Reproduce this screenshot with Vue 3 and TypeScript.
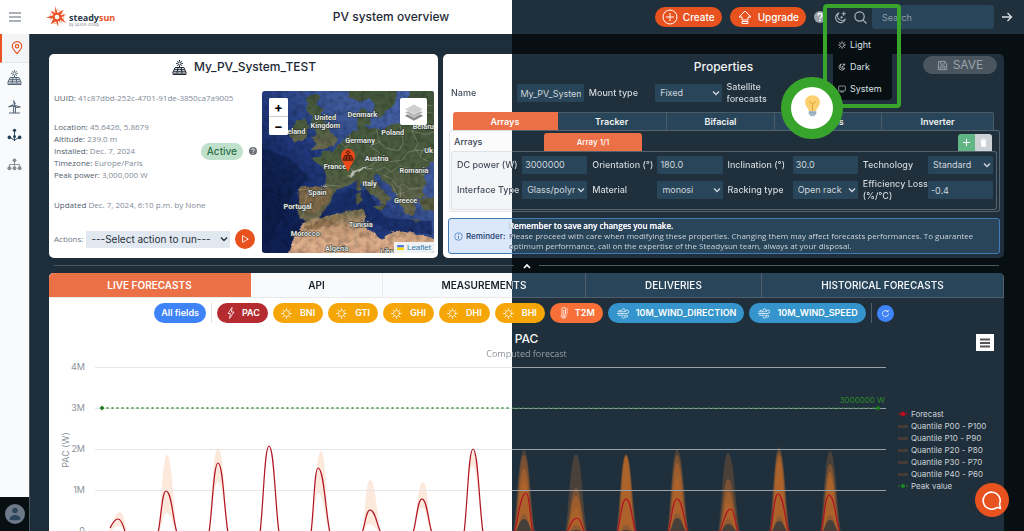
<script setup lang="ts">
import { ref } from 'vue'

interface Pill { label: string; kind: string; icon: string }
interface Field { id: string; label: string; value: string; select: boolean }
interface Peak { from: number; to: number; x: number; y: number }
interface Band { from: number; to: number; x: number; y: number; lowX: number; lowY: number }

const base = 533

const facts = [
  { name: 'Location:', value: '45.6426, 5.8679' },
  { name: 'Altitude:', value: '239.0 m' },
  { name: 'Installed:', value: 'Dec. 7, 2024' },
  { name: 'Timezone:', value: 'Europe/Paris' },
  { name: 'Peak power:', value: '3,000,000 W' },
]

const arrayFields: Field[] = [
  { id: 'power', label: 'DC power (W)', value: '3000000', select: false },
  { id: 'orientation', label: 'Orientation (°)', value: '180.0', select: false },
  { id: 'inclination', label: 'Inclination (°)', value: '30.0', select: false },
  { id: 'technology', label: 'Technology', value: 'Standard', select: true },
  { id: 'interface', label: 'Interface Type', value: 'Glass/polymer', select: true },
  { id: 'material', label: 'Material', value: 'monosi', select: true },
  { id: 'racking', label: 'Racking type', value: 'Open rack', select: true },
  { id: 'loss', label: 'Efficiency Loss\n(%/°C)', value: '-0.4', select: false },
]

const propertyTabs = ['Arrays', 'Tracker', 'Bifacial', 'Losses', 'Inverter']
const activeProperty = ref('Arrays')
const dataTabs = ['LIVE FORECASTS', 'API', 'MEASUREMENTS', 'DELIVERIES', 'HISTORICAL FORECASTS']
const activeData = ref('LIVE FORECASTS')

const pills: Pill[] = [
  { label: 'PAC', kind: 'red', icon: 'bolt' },
  { label: 'BNI', kind: 'amber', icon: 'sun' },
  { label: 'GTI', kind: 'amber', icon: 'sun' },
  { label: 'GHI', kind: 'amber', icon: 'sun' },
  { label: 'DHI', kind: 'amber', icon: 'sun' },
  { label: 'BHI', kind: 'amber', icon: 'sun' },
  { label: 'T2M', kind: 'coral', icon: 'temp' },
  { label: '10M_WIND_DIRECTION', kind: 'sky', icon: 'wind' },
  { label: '10M_WIND_SPEED', kind: 'sky', icon: 'wind' },
]

const legend = ['Quantile P00 - P100', 'Quantile P10 - P90', 'Quantile P20 - P80', 'Quantile P30 - P70', 'Quantile P40 - P60']

const gridRows = [
  { y: 367, label: '4M' },
  { y: 408, label: '3M' },
  { y: 449, label: '2M' },
  { y: 490, label: '1M' },
  { y: 531, label: '0' },
]

const peaks: Peak[] = [
  { from: 158, to: 177, x: 166, y: 491 },
  { from: 209, to: 228, x: 218, y: 463 },
  { from: 260, to: 279, x: 269, y: 446 },
  { from: 311, to: 330, x: 318, y: 468 },
  { from: 362, to: 381, x: 370, y: 510 },
  { from: 413, to: 432, x: 422, y: 499 },
  { from: 464, to: 483, x: 473, y: 449 },
  { from: 514, to: 533, x: 526, y: 493 },
  { from: 566, to: 585, x: 577, y: 518 },
  { from: 617, to: 636, x: 626, y: 499 },
  { from: 668, to: 688, x: 677, y: 499 },
  { from: 719, to: 738, x: 731, y: 509 },
  { from: 770, to: 789, x: 778, y: 494 },
  { from: 821, to: 840, x: 829, y: 495 },
]

const lightBands: Band[] = [
  { from: 108, to: 128, x: 120, y: 512, lowX: 118, lowY: 526 },
  { from: 158, to: 177, x: 167, y: 455, lowX: 167, lowY: 513 },
  { from: 208, to: 229, x: 218, y: 448, lowX: 218, lowY: 482 },
  { from: 260, to: 280, x: 270, y: 447, lowX: 269, lowY: 450 },
  { from: 311, to: 330, x: 321, y: 451, lowX: 318, lowY: 493 },
  { from: 362, to: 381, x: 370, y: 480, lowX: 369, lowY: 524 },
  { from: 413, to: 432, x: 423, y: 482, lowX: 422, lowY: 508 },
  { from: 464, to: 484, x: 474, y: 450, lowX: 472, lowY: 466 },
]

// Tops of the nested quantile areas, widest first.
const darkBands = [
  { from: 513, to: 535, x: 524, tops: [450, 455, 468, 480], low: 519 },
  { from: 565, to: 587, x: 576, tops: [454, 488, 496, 508], low: 530 },
  { from: 616, to: 637, x: 626, tops: [454, 455, 456, 457], low: 530 },
  { from: 667, to: 689, x: 677, tops: [449, 455, 463, 478], low: 518 },
  { from: 718, to: 740, x: 728, tops: [453, 479, 491, 502], low: 524 },
  { from: 769, to: 790, x: 779, tops: [447, 451, 455, 461], low: 521 },
  { from: 820, to: 841, x: 830, tops: [451, 464, 472, 478], low: 520 },
]

function bell(from: number, to: number, x: number, y: number): string {
  const h = base - y
  const l = x - from
  const r = to - x
  return `M${from},${base} C${from + l * 0.4},${base - h * 0.35} ${x - l * 0.5},${y} ${x},${y} ` +
    `C${x + r * 0.5},${y} ${to - r * 0.4},${base - h * 0.35} ${to},${base}`
}

function bandPath(b: Band): string {
  return `${bell(b.from, b.to, b.x, b.y)}Z ${bell(b.from + 1, b.to - 1, b.lowX, b.lowY)}Z`
}
</script>

<template>
  <div class="app">
    <svg class="defs" aria-hidden="true">
      <symbol id="solar" viewBox="0 0 24 24">
        <g fill="none" stroke="currentColor" stroke-width="1.6">
          <circle cx="12" cy="5.500" r="2.600" />
          <path d="M12 0v2M6.500 5.500h2M15.500 5.500h2M8 1.500l1.300 1.300M16 1.500l-1.300 1.300M8 9.500l1.300-1.300M16 9.500l-1.300-1.300M12 9v3" />
          <path d="M5 12h14l4 9H1zM3.500 15h17M2.300 18h19.400M9.500 12L8 21M14.500 12l1.500 9" />
          <path d="M1 23.200h22" />
        </g>
      </symbol>
      <symbol id="sun" viewBox="0 0 24 24">
        <g fill="none" stroke="currentColor" stroke-width="1.700" stroke-linecap="round">
          <circle cx="12" cy="12" r="6.500" />
          <path d="M12 1v3M12 20v3M1 12h3M20 12h3M4.200 4.200l2 2M17.800 17.800l2 2M4.200 19.800l2-2M17.800 6.200l2-2" />
        </g>
      </symbol>
      <symbol id="bolt" viewBox="0 0 24 24">
        <path d="M14 1L6 13h5l-2 10 9-13h-5z" fill="none" stroke="currentColor" stroke-width="1.600" stroke-linejoin="round" />
      </symbol>
      <symbol id="temp" viewBox="0 0 24 24">
        <g fill="none" stroke="currentColor" stroke-width="1.600">
          <path d="M8 14V4a3.500 3.500 0 0 1 7 0v10a5 5 0 1 1-7 0z" />
          <circle cx="11.500" cy="18" r="2" /><path d="M11.500 16V6M17 4h3M17 8h3M17 12h3" />
        </g>
      </symbol>
      <symbol id="wind" viewBox="0 0 30 24">
        <g fill="none" stroke="currentColor" stroke-width="1.700" stroke-linecap="round">
          <path d="M2 8h13a3.500 3.500 0 1 0-3.500-3.500M1 12h22a4 4 0 1 0-4-4M3 16h12a3.500 3.500 0 1 1-3.500 3.500M19 16h3a2.500 2.500 0 1 1-2 4M5 5h4" />
        </g>
      </symbol>
      <symbol id="moon" viewBox="0 0 24 24">
        <g fill="none" stroke="currentColor" stroke-width="2" stroke-linecap="round" stroke-linejoin="round">
          <path d="M9 3.500A9.200 9.200 0 1 0 20.800 15 7.800 7.800 0 0 1 9 3.500z" />
          <path d="M18 2v6M15 5h6M14 10v3M12.500 11.500h3" />
        </g>
      </symbol>
      <symbol id="help" viewBox="0 0 24 24">
        <circle cx="12" cy="12" r="12" fill="currentColor" />
        <path d="M8 9a4 4 0 1 1 5.500 3.700c-1 .5-1.500 1-1.500 2.300" fill="none" stroke="#fff" stroke-width="2.600" />
        <circle cx="12" cy="18.500" r="1.700" fill="#fff" />
      </symbol>
      <symbol id="chevron" viewBox="0 0 10 10">
        <path d="M2 3.500l3 3 3-3" fill="none" stroke="currentColor" stroke-width="1.400" />
      </symbol>
    </svg>

    <header class="topbar">
      <button class="bare burger" aria-label="Open menu">
        <svg viewBox="0 0 12 10"><path d="M0 1h12M0 5h12M0 9h12" stroke="#5b6673" stroke-width="1.200" /></svg>
      </button>
      <a class="logo" href="#" aria-label="steadysun by QUOS Group">
        <svg viewBox="0 0 24 24">
          <circle cx="12" cy="12" r="7.500" fill="none" stroke="#f4a07c" stroke-width=".8" stroke-dasharray="8 2" />
          <path fill="#e9562a" fill-rule="evenodd" d="M10 0l2.500 7.500L19 4l-3 6 6-1-5 3.500 5 6-7-3.500 1 3-3-2 .5 7L11 17l-6 3 3-6-8-1.500 8-2.500-3-5 5 2.500zM12 9.500a2.500 2.500 0 1 0 0 5 2.500 2.500 0 1 0 0-5z" />
        </svg>
        <span class="brand"><b>steady<i>sun</i></b><small>by QUOS Group</small></span>
      </a>
      <h1>PV system overview</h1>
      <button class="cta">
        <svg viewBox="0 0 16 16" fill="none" stroke="#fff"><circle cx="8" cy="8" r="7" /><path d="M8 4v8M4 8h8" /></svg>Create
      </button>
      <button class="cta">
        <svg viewBox="0 0 16 16" fill="none" stroke="#fff" stroke-linejoin="round"><path d="M8 2l6 6h-3v3H5V8H2zM5 12.500h6v2H5z" /></svg>Upgrade
      </button>
      <button class="bare help" aria-label="Help"><svg viewBox="0 0 24 24"><use href="#help" /></svg></button>
      <div class="theme">
        <button class="bare" aria-label="Theme"><svg viewBox="0 0 24 24"><use href="#moon" /></svg></button>
        <div class="menu">
          <button><svg viewBox="0 0 24 24"><use href="#sun" /></svg>Light</button>
          <button><svg viewBox="0 0 24 24"><use href="#moon" /></svg>Dark</button>
          <button>
            <svg viewBox="0 0 24 24" fill="none" stroke="currentColor" stroke-width="1.800"><rect x="2" y="3" width="20" height="15" rx="2" /><path d="M7 21h10" /></svg>System
          </button>
        </div>
        <div class="frame"></div>
        <div class="bulb">
          <svg viewBox="0 0 28 34">
            <path d="M14 2C7.500 2 3 6.500 3 12.500c0 5 4 6.500 5.500 12.500h11c1.500-6 5.500-7.500 5.500-12.500C25 6.500 20.500 2 14 2z" fill="#fdd06f" />
            <path d="M9 11l5 4 5-4M14 15v10" fill="none" stroke="#e8a33c" stroke-width="1.500" />
            <path d="M8.500 25h11v5l-3 3h-5l-3-3z" fill="#a9bccb" /><path d="M8.500 28h11" stroke="#7c93a6" />
          </svg>
        </div>
      </div>
      <button class="bare find" aria-label="Search">
        <svg viewBox="0 0 14 14" fill="none" stroke="currentColor" stroke-width="1.300"><circle cx="6" cy="6" r="5" /><path d="M9.500 9.500l4 4" /></svg>
      </button>
      <input class="search" type="search" placeholder="Search" aria-label="Search systems" />
      <button class="bare go" aria-label="Go">
        <svg viewBox="0 0 12 12" fill="none" stroke="currentColor" stroke-width="1.300"><path d="M1 6h9M6.500 2L10.500 6l-4 4" /></svg>
      </button>
    </header>

    <div class="body">
      <nav class="side" aria-label="Sections">
        <a class="on" href="#" aria-label="Sites">
          <svg viewBox="0 0 14 16" fill="none" stroke="currentColor" stroke-width="1.300"><path d="M7 14.500C3 10.500 1.500 8.500 1.500 6a5.500 5.500 0 0 1 11 0c0 2.500-1.500 4.500-5.500 8.500z" /><circle cx="7" cy="6" r="2" /></svg>
        </a>
        <a href="#" aria-label="Solar"><svg viewBox="0 0 24 24"><use href="#solar" /></svg></a>
        <a href="#" aria-label="Wind">
          <svg viewBox="0 0 16 16" fill="none" stroke="currentColor" stroke-width="1.100"><path d="M7 15V8h2v7M2 15h12M8 7L7 1.500l2 4M8 7L1.500 8.500 6.500 6M8.500 7l6 1.500-5 .5" /></svg>
        </a>
        <a class="navy" href="#" aria-label="Portfolio">
          <svg viewBox="0 0 16 16"><path d="M8 3v11M3 10l5 3 5-3" fill="none" stroke="currentColor" /><g fill="currentColor"><circle cx="8" cy="2.500" r="1.800" /><circle cx="2.500" cy="10" r="1.900" /><circle cx="13.500" cy="10" r="1.900" /><circle cx="8" cy="9" r="1.600" /></g></svg>
        </a>
        <a class="grey" href="#" aria-label="Hierarchy">
          <svg viewBox="0 0 16 16"><path d="M8 4v6M2.500 11V8h11v3" fill="none" stroke="currentColor" /><g fill="currentColor"><circle cx="8" cy="3.500" r="2" /><circle cx="2.500" cy="12" r="2.100" /><circle cx="8" cy="12" r="2.100" /><circle cx="13.500" cy="12" r="2.100" /></g></svg>
        </a>
        <button class="avatar" aria-label="Account">
          <svg viewBox="0 0 20 20"><circle cx="10" cy="10" r="10" fill="#6d7889" /><circle cx="10" cy="6.500" r="2.800" fill="#2b465b" /><path d="M4.500 15.500c0-6 11-6 11 0 0 1-11 1-11 0z" fill="#2b465b" /></svg>
        </button>
      </nav>

      <main>
        <div class="cards">
          <section class="card system">
            <h2><svg viewBox="0 0 24 24"><use href="#solar" /></svg>My_PV_System_TEST</h2>
            <div class="system-body">
              <div class="details">
                <p><b>UUID:</b> 41c87dbd-252c-4701-91de-3850ca7a9005</p>
                <div class="facts">
                  <div><p v-for="f in facts" :key="f.name"><b>{{ f.name }}</b> {{ f.value }}</p></div>
                  <div class="status">
                    <span>Active</span><svg viewBox="0 0 24 24"><use href="#help" /></svg>
                  </div>
                </div>
                <p><b>Updated</b> Dec. 7, 2024, 6:10 p.m. by None</p>
                <div class="actions">
                  <label for="action">Actions:</label>
                  <span class="pick">
                    <select id="action"><option>---Select action to run---</option></select>
                    <svg viewBox="0 0 10 10"><use href="#chevron" /></svg>
                  </span>
                  <button aria-label="Run action"><svg viewBox="0 0 12 12"><path d="M3 2l7 4-7 4z" fill="none" stroke="#fff" stroke-linejoin="round" /></svg></button>
                </div>
              </div>
              <div class="map">
                <svg viewBox="6 9 516 487" preserveAspectRatio="xMidYMid slice" role="img" aria-label="Satellite map of Europe">
                  <defs>
                    <linearGradient id="sea" x1="0" y1=".6" x2=".7" y2="0"><stop offset="0" stop-color="#0f2154" /><stop offset=".4" stop-color="#223b80" /><stop offset=".7" stop-color="#3d5898" /><stop offset="1" stop-color="#4560a6" /></linearGradient>
                    <linearGradient id="sand" x1="0" y1="0" x2="0" y2="1"><stop offset="0" stop-color="#66694a" /><stop offset=".35" stop-color="#c49a76" /><stop offset=".7" stop-color="#e0b08c" /><stop offset="1" stop-color="#d8a482" /></linearGradient>
                    <linearGradient id="land" x1="0" y1="0" x2="0" y2="1"><stop offset="0" stop-color="#43573c" /><stop offset=".6" stop-color="#4e5f41" /><stop offset="1" stop-color="#706a50" /></linearGradient>
                    <filter id="grain" x="0" y="0" width="100%" height="100%"><feTurbulence type="fractalNoise" baseFrequency=".06" numOctaves="4" seed="4" /><feColorMatrix values="0 0 0 0 0  0 0 0 0 0  0 0 0 0 0  1.600 0 0 0 -.600" /></filter>
                    <filter id="coast"><feTurbulence type="fractalNoise" baseFrequency=".05" numOctaves="3" seed="2" /><feDisplacementMap in="SourceGraphic" scale="14" xChannelSelector="R" yChannelSelector="G" /></filter>
                  </defs>
                  <rect x="6" y="9" width="516" height="487" fill="url(#sea)" />
                  <path d="M6 180l80 30 60 60-50 50-40 90-50 86z" fill="#0a1a42" opacity=".5" />
                  <path d="M205 360l60-60 60 10 50 80 140 10v40l-120-10-70-30-60-20z" fill="#182d68" opacity=".8" />
                  <g filter="url(#coast)">
                    <path fill="url(#land)" d="M140 30l32-16 8 16-15 20 28 12-13 23 22 20 12 30 20 14-8 24-28 8-46 7 18-22-16-14 18-16-20-28 8-20-20-20zM105 100l30-8 12 22-8 38-36 12-14-22zM262 0h155l-12 50-28 22-20 22-14-30-8-34-34 12-32-14zM290 80l16-20 18 12 8 34-26 10-14-6z" />
                    <path fill="url(#land)" d="M150 210l36-4 2-18 28 6 26-28 24-24 26-16 4-16 26 8 32 8 40-14 30-4 6-38 14-30 4-40h96v215l-38 12-14 24 6 30-8 30 10 16-20 4-26 4 16 24-10 26-20-4-14-26-16-26-16-30-26-26-18-18-10 12 12 24 40 40-10 6-6 20-20-22-30-22-20-26-24-4-36 18-24 12-10 30-26 34-16 20-28 6-26-12-2-38 8-30-8-22 44-6 34 6 8-36-16-28z" />
                    <path fill="#5a5e42" d="M476 335l60-12v48l-44-4zM290 288l10-2 2 22-10 2zM289 316l14-2 1 30-12 4zM338 356l38-6-10 22zM452 394l30 3-14 5z" />
                    <path fill="url(#sand)" d="M85 510l14-58 30-42 22-16 50-10 60-12 50-8 6 20-10 26 24 20 38 24 26-24 36-2 40 12 70 14v60z" />
                    <path fill="#8b6e4b" opacity=".75" d="M115 300l50-6 50 10-14 38-36 36-30-6-18-34zM130 420l60-25 60-10-30 25-60 18z" />
                    <path fill="#e2e3df" opacity=".7" d="M266 262l14-12 24-9 40-4-34 8-24 12-14 14zM176 291l40 6-22 1z" />
                  </g>
                  <rect x="6" y="9" width="516" height="487" filter="url(#grain)" opacity=".3" />
                  <g fill="none" stroke="#b9bdae" stroke-width="1.600" opacity=".65">
                    <path d="M240 165l18 14 10 24-6 32 20 16 30-12 26-8 20-16 24 8 44-6 18-24 28-6M350 125l8 38 20 18 38 8 14-26-10-50M258 179l16-20-6-20M338 212l20-18-28-18 30-14M190 291l52 4M118 306l28-2-12 44-6 38M348 250l26-12 20 14 26-18 30 8 22 14 22 6M370 262l24 10 20 26 14-10 22 16 34-4M396 290l14 30 24-6M420 300l2 30M428 86l34 4 20-20 36 6M428 58l50-10 36 6M468 90l-12 40 18 36-10 20 44 4M456 130l40 10 26-8M470 190l14 20 22 12M262 378l30 56-10 60M140 420l-34 30M480 210l10-30 32 14" />
                  </g>
                  <g class="places">
                    <text x="196" y="98">United</text><text x="196" y="120">Kingdom</text><text x="307" y="88">Denmark</text>
                    <text x="109" y="140">eland</text><text x="398" y="143">Poland</text><text x="490" y="125">Belaru</text>
                    <text x="300" y="166">Germany</text><text x="506" y="196">Uk</text><text x="350" y="221">Austria</text>
                    <text x="225" y="245">France</text><text x="462" y="257">Romania</text><text x="329" y="294">Italy</text>
                    <text x="172" y="323">Spain</text><text x="437" y="347">Greece</text><text x="113" y="365">Portugal</text>
                    <text x="302" y="417">Tunisia</text><text x="136" y="445">Morocco</text><text x="230" y="490">Algeria</text><text x="387" y="500">Libya</text>
                  </g>
                  <path d="M264 254c-4-18-21-32-21-50a21 21 0 0 1 42 0c0 18-17 32-21 50z" fill="#ec4a1a" />
                  <svg x="247" y="186" width="34" height="34" viewBox="0 0 24 24" class="pin"><use href="#solar" /></svg>
                </svg>
                <div class="zoom"><button aria-label="Zoom in">+</button><button aria-label="Zoom out">−</button></div>
                <button class="layers" aria-label="Layers">
                  <svg viewBox="0 0 26 26"><path d="M13 12l10 5-10 5.500L3 17z" fill="#8c8c8c" /><path d="M13 8.500l10 5-10 5.500-10-5.500z" fill="#b4b4b4" stroke="#fff" stroke-width=".5" /><path d="M13 4.500l10 5.500-10 5.500L3 10z" fill="#cfcfcf" stroke="#fff" stroke-width=".5" /></svg>
                </button>
                <a class="credit" href="#"><svg viewBox="0 0 8 6"><path fill="#4c7be1" d="M0 0h8v3H0z" /><path fill="#ffd500" d="M0 3h8v3H0z" /></svg>Leaflet</a>
              </div>
            </div>
          </section>

          <section class="card props">
            <div class="props-head">
              <h2>Properties</h2>
              <button class="save"><svg viewBox="0 0 12 12" fill="none" stroke="currentColor"><path d="M1.500 1.500h7l2 2v7h-9zM4 1.500v3h4v-3M3.500 10.500v-4h5v4M4.500 8.500h3" /></svg>SAVE</button>
            </div>
            <div class="fields general">
              <div class="field"><label for="name">Name</label><input id="name" value="My_PV_System_TEST" /></div>
              <div class="field"><label for="mount">Mount type</label>
                <span class="pick"><select id="mount"><option>Fixed</option></select><svg viewBox="0 0 10 10"><use href="#chevron" /></svg></span>
              </div>
              <div class="field"><label for="satellite">Satellite forecasts</label><input id="satellite" type="checkbox" checked /></div>
            </div>
            <div class="prop-tabs" role="tablist">
              <button v-for="t in propertyTabs" :key="t" role="tab" :class="{ active: t === activeProperty }" @click="activeProperty = t">{{ t }}</button>
            </div>
            <div class="panel">
              <div class="panel-head">
                <span class="caption">Arrays</span>
                <button class="array-tab">Array 1/1</button>
                <div class="tools">
                  <button class="add" aria-label="Add array"><svg viewBox="0 0 10 10"><path d="M5 1v8M1 5h8" stroke="#fff" stroke-width="1.200" /></svg></button>
                  <button class="del" aria-label="Delete array"><svg viewBox="0 0 10 10"><path d="M1.500 2h7M4 1h2M2.500 3h5l-.5 6.500H3z" fill="#fff" stroke="#fff" stroke-width=".8" /></svg></button>
                </div>
              </div>
              <div class="fields array">
                <div v-for="f in arrayFields" :key="f.id" class="field">
                  <label :for="f.id">{{ f.label }}</label>
                  <span v-if="f.select" class="pick"><select :id="f.id"><option>{{ f.value }}</option></select><svg viewBox="0 0 10 10"><use href="#chevron" /></svg></span>
                  <input v-else :id="f.id" :value="f.value" />
                </div>
              </div>
            </div>
            <div class="reminder">
              <svg viewBox="0 0 10 10" fill="none" stroke="#3b73c4"><circle cx="5" cy="5" r="4.200" stroke-width=".8" /><path d="M5 4.500v3M5 2.500v1" /></svg>
              <b>Reminder:</b>
              <div class="split-text"><strong>Remember to save any changes you make.</strong><br />Please proceed with care when modifying these properties. Changing them may affect forecasts performances. To guarantee<br />optimum performance, call on the expertise of the Steadysun team, always at your disposal.</div>
            </div>
          </section>
        </div>

        <div class="fold">
          <button aria-label="Collapse"><svg viewBox="0 0 8 6"><path d="M1 5l3-3 3 3" fill="none" stroke="#fff" stroke-width="1.600" /></svg></button>
        </div>

        <section class="data">
          <div class="data-tabs" role="tablist">
            <button v-for="t in dataTabs" :key="t" role="tab" :class="{ active: t === activeData }" @click="activeData = t"><span>{{ t }}</span></button>
          </div>
          <div class="pills">
            <button class="pill blue">All fields</button>
            <i></i>
            <button v-for="p in pills" :key="p.label" :class="['pill', 'iconed', p.kind]">
              <svg :class="p.icon" viewBox="0 0 24 24"><use :href="'#' + p.icon" /></svg>{{ p.label }}
            </button>
            <i></i>
            <button class="pill blue reload" aria-label="Reload">
              <svg viewBox="0 0 12 12" fill="none" stroke="#fff"><path d="M10 6a4 4 0 1 1-1.200-2.800M9.500 1v2.500H7" /></svg>
            </button>
          </div>
          <div class="chart-head">
            <h3>PAC</h3>
            <p class="split-text">Computed forecast</p>
            <button aria-label="Chart menu"><svg viewBox="0 0 12 12"><path d="M1 2.500h10M1 6h10M1 9.500h10" stroke="#555" stroke-width="2" /></svg></button>
          </div>
          <div class="plot">
            <svg viewBox="49 362 841 169" role="img" aria-label="PAC forecast chart">
              <text v-for="g in gridRows" :key="g.y" x="85" :y="g.y + 3" text-anchor="end" class="tick">{{ g.label }}</text>
              <text class="tick" text-anchor="middle" transform="translate(69 450) rotate(-90)">PAC (W)</text>
              <path v-for="b in lightBands" :key="b.x" :d="bandPath(b)" fill="#fde8dc" fill-rule="evenodd" />
              <g v-for="d in darkBands" :key="d.x">
                <path :d="bell(d.from, d.to, d.x, d.tops[0])" fill="#8a5a38" opacity=".4" />
                <path :d="bell(d.from + 1, d.to - 1, d.x, d.tops[1])" fill="#a9612c" opacity=".5" />
                <path :d="bell(d.from + 2, d.to - 2, d.x, d.tops[2])" fill="#b5652a" opacity=".6" />
                <path :d="bell(d.from + 3, d.to - 3, d.x, d.tops[3])" fill="#b5652a" opacity=".6" />
                <path :d="bell(d.from + 3, d.to - 3, d.x, d.low - 5)" fill="#71503a" opacity=".5" />
                <path :d="bell(d.from + 2, d.to - 2, d.x, d.low)" fill="#3f3c3b" opacity=".9" />
              </g>
              <g v-for="g in gridRows" :key="g.y" class="grid">
                <path :d="`M95,${g.y}H512`" stroke="#e6e6e8" /><path :d="`M512,${g.y}H886`" stroke="#9aa2a8" />
              </g>
              <path d="M110 528c3-6 5-9 8-9s5 5 7 13" class="line" />
              <path v-for="p in peaks" :key="p.x" :d="bell(p.from, p.to, p.x, p.y)" class="line" />
              <path d="M102 408H512" stroke="#2c8a2c" stroke-width="1.400" stroke-dasharray="1 4" stroke-linecap="round" />
              <path d="M512 408H878" stroke="#2f7d34" stroke-dasharray="3 2" />
              <path d="M102 405.500l2.500 2.500-2.500 2.500-2.500-2.500zM878 405.500l2.500 2.500-2.500 2.500-2.500-2.500z" fill="#1f7f1f" />
              <text x="885" y="403" text-anchor="end" class="peak">3000000 W</text>
            </svg>
            <ul class="legend">
              <li><svg viewBox="0 0 10 6"><path d="M0 3h10" stroke="#b30f20" /><circle cx="5" cy="3" r="2.400" fill="#b30f20" /></svg>Forecast</li>
              <li v-for="l in legend" :key="l"><svg viewBox="0 0 10 6"><path d="M0 2h10v3H0z" fill="#443c38" /></svg>{{ l }}</li>
              <li><svg viewBox="0 0 10 6"><path d="M0 3h2M8 3h2" stroke="#1f8a1f" /><circle cx="5" cy="3" r="2" fill="#1f8a1f" /></svg>Peak value</li>
            </ul>
          </div>
        </section>
      </main>
    </div>

    <button class="chat" aria-label="Chat">
      <svg viewBox="0 0 20 20" fill="none" stroke="#fff" stroke-width="1.600"><path d="M18.500 18.500l-3.500-1.200A8.500 8.500 0 1 1 17.500 14z" stroke-linejoin="round" /></svg>
    </button>
  </div>
</template>

<style>
body { margin: 0; background: #1d2e3a; }
</style>

<style scoped>
* { box-sizing: border-box; }
.app {
  --card: linear-gradient(90deg, #ffffff 50%, #1f2f3b 50%);
  --page: linear-gradient(90deg, #1d2e3a 50%, #070f12 50%);
  --ink: linear-gradient(90deg, #3c4653 50%, #dbe1e6 50%);
  --orange: #e8521f;
  --tab: #ec7046;
  min-height: 100vh;
  display: flex;
  flex-direction: column;
  font-family: Inter, "Noto Sans", sans-serif;
  font-size: 8px;
  line-height: 12px;
  color: #dbe1e6;
  background: var(--page) fixed;
}
.defs { position: absolute; width: 0; height: 0; }
svg { display: block; flex: none; }
h1, h2, h3, p, ul { margin: 0; padding: 0; }
button, input, select { font: inherit; color: inherit; border: 0; padding: 0; margin: 0; min-width: 0; }
button { cursor: pointer; display: flex; align-items: center; justify-content: center; }
.bare { background: none; }
.split-text, .field label, .data-tabs span {
  background: var(--ink) fixed;
  -webkit-background-clip: text;
  background-clip: text;
  color: transparent;
}

.topbar {
  height: 34px;
  display: flex;
  align-items: center;
  padding: 0 11px 0 9px;
  background: var(--card) fixed;
  flex: none;
}
.burger svg { width: 12px; height: 10px; }
.logo { display: flex; align-items: center; margin-left: 25px; gap: 1px; text-decoration: none; color: #26384a; }
.logo > svg { width: 22px; height: 22px; }
.brand { display: flex; flex-direction: column; padding-top: 6px; }
.brand b { font: 700 9px/9px "Open Sans", sans-serif; }
.brand i { font-style: normal; color: var(--orange); }
.brand small { font-size: 4px; line-height: 5px; color: #7b8793; }
h1 { flex: 1; text-align: center; font-size: 12px; line-height: 20px; font-weight: 500; color: #1e2936; padding-left: 12px; }
.cta {
  height: 20px;
  border-radius: 10px;
  background: var(--orange);
  color: #fff;
  font-size: 10px;
  font-weight: 500;
  gap: 5px;
  padding: 0 7px;
  margin-right: 8px;
}
.cta svg { width: 16px; height: 16px; }
.help { color: #9aa3ab; }
.help svg { width: 12px; height: 12px; }
.theme { position: relative; align-self: stretch; display: flex; align-items: center; margin: 0 7px 0 8px; z-index: 5; color: #aeb6bd; }
.theme > button svg { width: 13px; height: 13px; }
.menu {
  position: absolute;
  top: 34px;
  left: -1px;
  width: 59px;
  background: #070f12;
  border-radius: 0 0 4px 4px;
  color: #dbe1e6;
}
.menu button { width: 100%; height: 22px; background: none; justify-content: flex-start; gap: 4px; padding-left: 5px; font-size: 9px; }
.menu svg { width: 8px; height: 8px; }
.frame { position: absolute; top: 4px; left: -11px; width: 78px; height: 104px; border: 4px solid #38a42c; border-radius: 4px; pointer-events: none; }
.bulb {
  position: absolute;
  top: 77px;
  left: -53px;
  width: 62px;
  height: 62px;
  border-radius: 50%;
  border: 10px solid #38a42c;
  background: #fff;
  display: grid;
  place-items: center;
  padding-bottom: 5px;
}
.bulb svg { width: 19px; height: 23px; }
.find { color: #aeb6bd; margin-right: 5px; }
.find svg { width: 13px; height: 13px; }
.search { width: 122px; height: 24px; border-radius: 3px; background: #294559; padding: 0 10px; font-size: 9px; margin-right: 7px; }
.search::placeholder { color: #8e9ba6; opacity: 1; }
.go svg { width: 12px; height: 12px; }

.body { flex: 1; display: flex; }
.side { width: 30px; flex: none; background: #f9fafb; border-right: 1px solid #4a5864; display: flex; flex-direction: column; color: #56677a; }
.side a { height: 29px; display: grid; place-items: center; color: inherit; }
.side svg { width: 15px; height: 15px; }
.side a.on { color: var(--orange); border-left: 2px solid var(--orange); background: #f3f4f6; border-bottom: 1px solid #e3e6ea; }
.side a.on svg { width: 12px; height: 14px; margin-left: 3px; }
.side a.navy { color: #24405a; }
.side a.grey { color: #8b8d90; }
.avatar { margin-top: auto; height: 34px; background: #070f12; }
.side .avatar svg { width: 20px; height: 20px; }

main { flex: 1; min-width: 0; padding: 20px 20px 0 19px; display: flex; flex-direction: column; }
.cards { display: grid; grid-template-columns: minmax(0, 389fr) minmax(0, 561fr); gap: 5px; }
.card { border-radius: 5px; background: var(--card) fixed; }
h2 { font-size: 12px; line-height: 26px; font-weight: 500; }
.system { color: #7f8a97; padding: 0 4px 5px 5px; }
.system h2 { display: flex; justify-content: center; align-items: center; gap: 7px; color: #1e2936; padding-bottom: 11px; }
.system h2 svg { width: 15px; height: 15px; }
.system-body { display: grid; grid-template-columns: minmax(0, 208fr) minmax(0, 172fr); }
.details { padding-top: 1px; font-family: "Open Sans", "Noto Sans", sans-serif; }
.details b { font-weight: 500; color: #515d6b; }
.facts { display: flex; align-items: center; justify-content: space-between; padding: 17px 5px 18px 0; }
.status { display: flex; align-items: center; gap: 6px; color: #6b6f73; font-family: Inter, sans-serif; }
.status span { background: #bfe0cb; color: #2b6f45; font-size: 10px; line-height: 17px; font-weight: 500; border-radius: 9px; padding: 0 6px; }
.status svg { width: 8px; height: 8px; }
.actions { display: flex; align-items: center; gap: 3px; margin-top: 18px; padding-right: 7px; color: #6b7684; }
.actions .pick { flex: 1; color: #273240; font-family: Inter, sans-serif; }
.actions select { background: #e2e8f0; font-size: 10px; height: 17px; }
.actions > button { width: 20px; height: 20px; border-radius: 50%; background: var(--orange); flex: none; margin-left: 2px; }
.actions > button svg { width: 10px; height: 10px; }
.pick { display: grid; min-width: 0; align-items: center; }
.pick > * { grid-area: 1 / 1; }
.pick svg { width: 10px; height: 10px; justify-self: end; margin-right: 1px; pointer-events: none; }
select { appearance: none; width: 100%; padding: 0 12px 0 5px; border-radius: 1px; }

.map { position: relative; height: 162px; border-radius: 3px; overflow: hidden; }
.map > svg { width: 100%; height: 100%; }
.places text { font: 700 22px Roboto, sans-serif; fill: #e6e8e4; text-anchor: middle; stroke: #2b3530; stroke-width: 3px; paint-order: stroke; }
.pin { color: #3a1408; }
.zoom { position: absolute; left: 7px; top: 7px; border-radius: 2px; overflow: hidden; background: #fff; color: #000; }
.zoom button { width: 19px; height: 18px; background: #fff; font-size: 13px; font-weight: 700; }
.zoom button + button { border-top: 1px solid #ccc; height: 19px; }
.layers { position: absolute; right: 7px; top: 7px; width: 27px; height: 27px; border-radius: 2px; background: #fff; }
.layers svg { width: 24px; height: 24px; }
.credit { position: absolute; right: 0; bottom: 0; display: flex; align-items: center; gap: 3px; padding: 0 3px; font: 8px/11px "Liberation Sans", Arial, sans-serif; background: #eef2f4; color: #3079ab; text-decoration: none; }
.credit svg { width: 7px; height: 5px; }

.props { padding: 0 5px 4px; }
.props-head { display: grid; grid-template-columns: 1fr auto 1fr; align-items: center; }
.props h2 { grid-column: 2; color: #f3f5f7; }
.save { justify-self: end; width: 74px; height: 18px; margin: 0 2px 4px; border-radius: 9px; background: #4a565f; color: #9ba3a9; font-size: 12px; gap: 5px; }
.save svg { width: 11px; height: 11px; }
.fields { display: grid; grid-template-columns: repeat(4, minmax(0, 1fr)); column-gap: 5px; }
.field { display: grid; grid-template-columns: minmax(0, 1fr) minmax(0, 1fr); align-items: center; font-size: 9px; }
.field label { font-weight: 500; white-space: pre; }
.general { padding: 1px 2px 7px 3px; }
.general .field { height: 24px; }
.general .field:nth-child(3) label { white-space: normal; }
.field input, .field select { height: 18px; width: 100%; background: #294559; border-radius: 1px; color: #cfd6dc; }
.field input { padding: 0 3px; }
.field input[type="checkbox"] { width: 12px; height: 12px; margin: 0; justify-self: center; }
.field .pick { color: #cfd6dc; }
.prop-tabs { display: grid; grid-template-columns: 105fr 109fr 109fr 107fr 112fr; margin: 0 5px; }
.prop-tabs button { height: 18px; background: #294559; color: #f0f3f5; font-weight: 600; font-size: 9px; border: 1px solid #4b5c69; border-width: 1px 1px 0 0; }
.prop-tabs .active { background: var(--tab); border-color: var(--tab); border-radius: 3px 0 0; color: #fff; }
.prop-tabs button:last-child { border-radius: 0 3px 0 0; }
.panel, .array {
  border: 1px solid transparent;
  border-radius: 3px;
  background: linear-gradient(90deg, #fbfbfc 50%, #1f2f3b 50%) fixed padding-box, linear-gradient(90deg, #dfe3e8 50%, #55636e 50%) fixed border-box;
}
.panel { padding: 2px 2px 1px 1px; margin-right: -1px; margin-left: 1px; }
.panel-head { display: flex; align-items: flex-end; height: 18px; padding: 0 5px 0 3px; }
.caption { width: 90px; color: #3c4653; font-size: 9px; font-weight: 500; line-height: 18px; }
.array-tab { width: 98px; height: 18px; border-radius: 3px 3px 0 0; background: var(--tab); color: #fff; font-weight: 500; }
.tools { margin-left: auto; display: flex; }
.tools button { width: 17px; height: 17px; }
.tools svg { width: 9px; height: 9px; }
.add { background: #62b585; border-radius: 3px 0 0; }
.del { background: #cdd2d7; border-radius: 0 3px 0 0; }
.array { padding: 3px 3px 7px 5px; row-gap: 4px; background: linear-gradient(90deg, #f4f5f7 50%, #1f2f3b 50%) fixed padding-box, linear-gradient(90deg, #dfe3e8 50%, #55636e 50%) fixed border-box; }
.array .field { height: 24px; }
.array .field:nth-child(-n + 4) { height: 19px; }
.reminder {
  margin: 6px -1px 0 0;
  padding: 1px 9px;
  border: 1px solid #4479b8;
  border-radius: 3px;
  display: flex;
  align-items: center;
  line-height: 10px;
  background: linear-gradient(90deg, #dbe8fc 50%, #294559 50%) fixed;
}
.reminder > svg { width: 9px; height: 9px; margin-left: -4px; }
.reminder > b { width: 43px; margin-left: 3px; color: #34507c; font-weight: 600; flex: none; }
.reminder div { white-space: nowrap; padding: 1px 0; font-family: "Open Sans", "Noto Sans", sans-serif; }
.reminder strong { font-weight: 600; color: #f4f6f8; }

.fold { height: 15px; display: flex; align-items: center; gap: 7px; margin: 0 5px; }
.fold::before, .fold::after { content: ""; flex: 1; height: 1px; background: #4b5963; }
.fold button { width: 11px; background: none; }
.fold svg { width: 8px; height: 6px; }

.data { flex: 1; border-radius: 5px 5px 0 0; overflow: hidden; background: var(--card) fixed; }
.data-tabs { display: grid; grid-template-columns: 202fr 132fr 203fr 176fr 242fr; border-bottom: 1px solid transparent; background: linear-gradient(90deg, #f8fafb 50%, #294559 50%) fixed padding-box, linear-gradient(90deg, #e8ebee 50%, #4f5f6b 50%) fixed border-box; }
.data-tabs button { height: 24px; background: none; font-size: 10px; font-weight: 600; border-right: 1px solid #4f5f6b; }
.data-tabs button:nth-child(2) { border-color: #e8ebee; }
.data-tabs span { --ink: linear-gradient(90deg, #18222d 50%, #f3f5f7 50%); }
.data-tabs .active { background: var(--tab); border-color: var(--tab); }
.data-tabs .active span { background: none; color: #fff; }
.pills { display: flex; justify-content: center; flex-wrap: wrap; align-items: center; gap: 5px; padding: 5px 5px 0 0; }
.pills i { width: 1px; height: 20px; background: #dfe3e7; }
.pills i:nth-last-of-type(1) { background: #4f5f6b; }
.pill { height: 20px; border-radius: 10px; color: #fff; font-size: 9px; font-weight: 600; padding: 0 7px; }
.pill.iconed { padding: 0 8px 0 8px; gap: 8px; min-width: 48px; }
.pill.iconed.sky { gap: 6px; padding: 0 8px 0 9px; }
.pill svg { width: 11px; height: 11px; }
.pill svg.bolt, .pill svg.temp { width: 12px; height: 14px; }
.pill svg.wind { width: 13px; height: 13px; }
.pill.blue { background: #3f83f8; }
.pill.red { background: #b42c30; }
.pill.amber { background: #f5a506; }
.pill.coral { background: #f87037; }
.pill.red, .pill.coral { gap: 5px; }
.pill.sky { background: #3594cb; }
.pill.reload { width: 17px; height: 17px; padding: 0; }
.pill.reload svg { width: 9px; height: 9px; }

.chart-head { position: relative; height: 39px; padding-top: 7px; display: flex; flex-direction: column; align-items: center; }
.chart-head h3 { font-size: 12px; line-height: 18px; font-weight: 500; color: #f3f5f7; }
.chart-head p { --ink: linear-gradient(90deg, #8a9097 50%, #9fa9b1 50%); font-size: 9px; font-family: "Open Sans", sans-serif; }
.chart-head button { position: absolute; right: 10px; top: 11px; width: 18px; height: 17px; background: #fff; }
.chart-head button svg { width: 12px; height: 12px; }
.plot { display: flex; align-items: flex-start; }
.plot > svg { flex: 841 1 0; min-width: 0; }
.grid { shape-rendering: crispEdges; }
.tick { font-size: 9px; fill: #8a9097; }
.peak { font-size: 8px; fill: #2c8a2c; }
.line { fill: none; stroke: #b01425; stroke-width: 1.2; }
.legend { flex: 114 1 0; min-width: 0; list-style: none; padding: 46px 0 0; color: #cbd2d8; white-space: nowrap; }
.legend li { display: flex; align-items: center; gap: 3px; padding-left: 8px; }
.legend svg { width: 10px; height: 6px; }
.chat { position: fixed; right: 15px; bottom: 14px; width: 34px; height: 34px; border-radius: 50%; background: var(--orange); }
.chat svg { width: 20px; height: 20px; }
</style>
